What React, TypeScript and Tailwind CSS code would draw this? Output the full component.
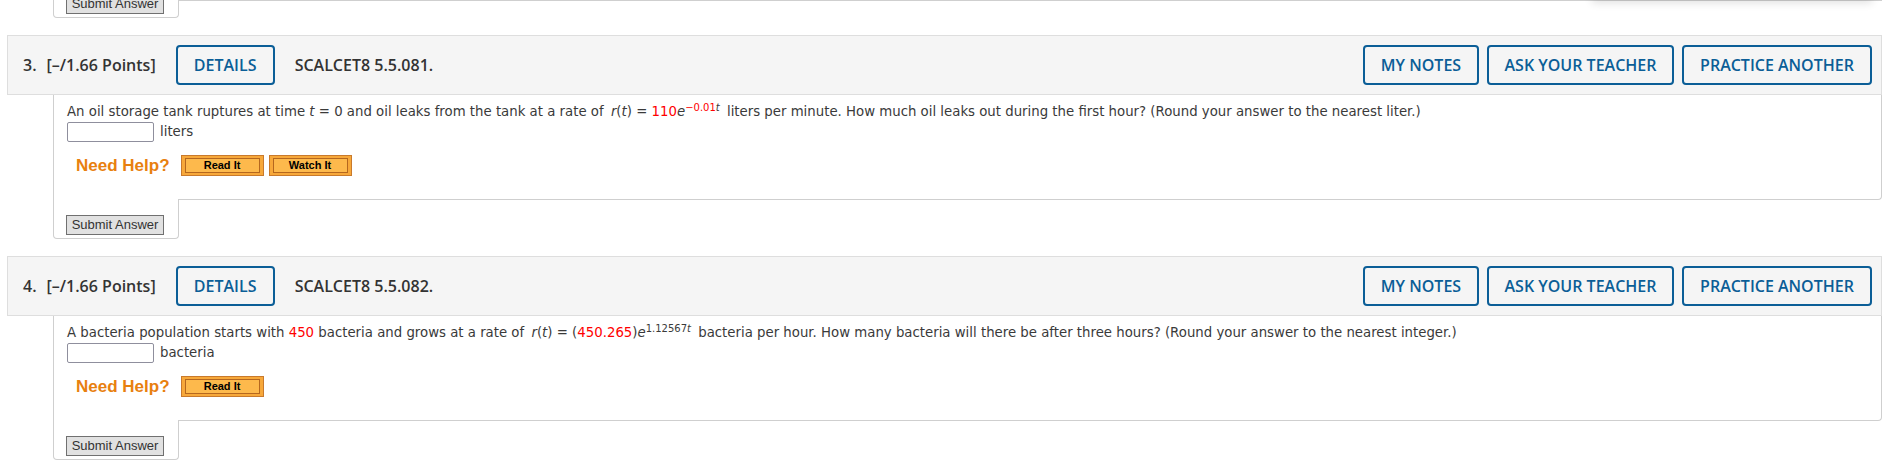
import React from "react";

const BLUE = "text-[#0b5e97] border-[#0b5e97]";

function HeaderButton({ children, w }: { children: React.ReactNode; w: string }) {
  return (
    <button
      type="button"
      className={`h-[40px] ${w} border-2 rounded-[4px] bg-transparent text-[16px] font-semibold whitespace-nowrap ${BLUE}`}
    >
      {children}
    </button>
  );
}

function HelpButton({ label }: { label: string }) {
  return (
    <button
      type="button"
      className="h-[21px] w-[83px] border border-[#c97a2c] bg-[#f7a83a] px-[3px] py-[2px]"
      style={{ fontFamily: "'Liberation Sans', Arial, sans-serif" }}
    >
      <span className="flex h-full w-full items-center justify-center border border-[#b5671e] bg-[#fdb94c] text-[11px] font-bold leading-none text-black">
        {label}
      </span>
    </button>
  );
}

function SubmitButton() {
  return (
    <button
      type="button"
      className="h-[20px] w-[98px] border border-[#707070] bg-[#e1e1e1] text-[13px] leading-none text-[#333]"
      style={{ fontFamily: "'Liberation Sans', Arial, sans-serif" }}
    >
      Submit Answer
    </button>
  );
}

interface QuestionProps {
  num: number;
  code: string;
  text: React.ReactNode;
  unit: string;
  watch?: boolean;
}

function Question({ num, code, text, unit, watch }: QuestionProps) {
  return (
    <div className="mt-[17px]">
      {/* header bar */}
      <div
        className="ml-[7px] w-[1875px] h-[60px] border border-[#dedede] bg-[#f5f5f5] flex items-center pl-[15px] pr-[9px] text-[#333]"
        style={{ fontFamily: "'Open Sans', sans-serif" }}
      >
        <span className="text-[16px] font-semibold">{num}.</span>
        <span className="ml-[10px] text-[16px] font-semibold">[–/1.66 Points]</span>
        <div className="ml-[20px]">
          <HeaderButton w="w-[99px]">DETAILS</HeaderButton>
        </div>
        <span className="ml-[20px] text-[16px] font-semibold">{code}</span>
        <div className="ml-auto flex gap-[8px]">
          <HeaderButton w="w-[116px]">MY NOTES</HeaderButton>
          <HeaderButton w="w-[187px]">ASK YOUR TEACHER</HeaderButton>
          <HeaderButton w="w-[190px]">PRACTICE ANOTHER</HeaderButton>
        </div>
      </div>

      {/* body */}
      <div className="ml-[53px] w-[1829px]">
        <div
          className="border-x border-b border-[#cfcfcf] rounded-br-[4px] pl-[13px] pt-[7px] pb-[23px] text-[13.3px] text-[#3a3a3a]"
          style={{ fontFamily: "'DejaVu Sans', Verdana, sans-serif" }}
        >
          <p className="leading-[20px]">{text}</p>
          <div className="flex items-center gap-[6px] h-[20px]">
            <input
              type="text"
              className="h-[20px] w-[87px] border border-[#8f8f9d] rounded-[2px] bg-white"
            />
            <span>{unit}</span>
          </div>
          <div className="mt-[13px] ml-[9px] h-[21px] flex items-center gap-[5px]">
            <span
              className="mr-[6px] text-[17px] leading-none font-bold text-[#e8800f]"
              style={{ fontFamily: "'Liberation Sans', Arial, sans-serif" }}
            >
              Need Help?
            </span>
            <HelpButton label="Read It" />
            {watch && <HelpButton label="Watch It" />}
          </div>
        </div>
        <div className="-mt-px w-[126px] h-[40px] bg-white border-x border-b border-[#cfcfcf] rounded-b-[4px] pl-[12px] pt-[12px]">
          <SubmitButton />
        </div>
      </div>
    </div>
  );
}

const Red = ({ children }: { children: React.ReactNode }) => (
  <span className="text-[#ff0000]">{children}</span>
);

export default function App() {
  return (
    <div className="relative w-[1882px] h-[475px] overflow-hidden bg-white">
      {/* tail of the previous question */}
      <div className="relative h-[18px] flex">
        <div className="w-[53px]" />
        <div className="-mt-[22px] w-[126px] h-[40px] bg-white border-x border-b border-[#cfcfcf] rounded-b-[4px] pl-[12px] pt-[12px]">
          <SubmitButton />
        </div>
        <div className="flex-1 border-t border-[#cfcfcf]" />
        <div className="absolute right-[10px] top-[-12px] h-[12px] w-[280px] shadow-[0_3px_8px_rgba(0,0,0,0.12)] bg-white" />
      </div>

      <Question
        num={3}
        code="SCALCET8 5.5.081."
        unit="liters"
        watch
        text={
          <>
            An oil storage tank ruptures at time <i>t</i> = 0 and oil leaks from the tank at a rate of{" "}
            <span className="pl-[3px]">
              <i>r</i>(<i>t</i>) = <Red>110</Red>
              <i>e</i>
              <sup className="text-[10px]">
                <Red>−0.01</Red>
                <i>t</i>
              </sup>
            </span>{" "}
            <span className="pl-[3px]">liters per minute.</span> How much oil leaks out during the first hour? (Round your
            answer to the nearest liter.)
          </>
        }
      />

      <Question
        num={4}
        code="SCALCET8 5.5.082."
        unit="bacteria"
        text={
          <>
            A bacteria population starts with <Red>450</Red> bacteria and grows at a rate of{" "}
            <span className="pl-[3px]">
              <i>r</i>(<i>t</i>) = (<Red>450.265</Red>)<i>e</i>
              <sup className="text-[10px]">
                1.12567<i>t</i>
              </sup>
            </span>{" "}
            <span className="pl-[3px]">bacteria per hour.</span> How many bacteria will there be after three hours? (Round
            your answer to the nearest integer.)
          </>
        }
      />
    </div>
  );
}
